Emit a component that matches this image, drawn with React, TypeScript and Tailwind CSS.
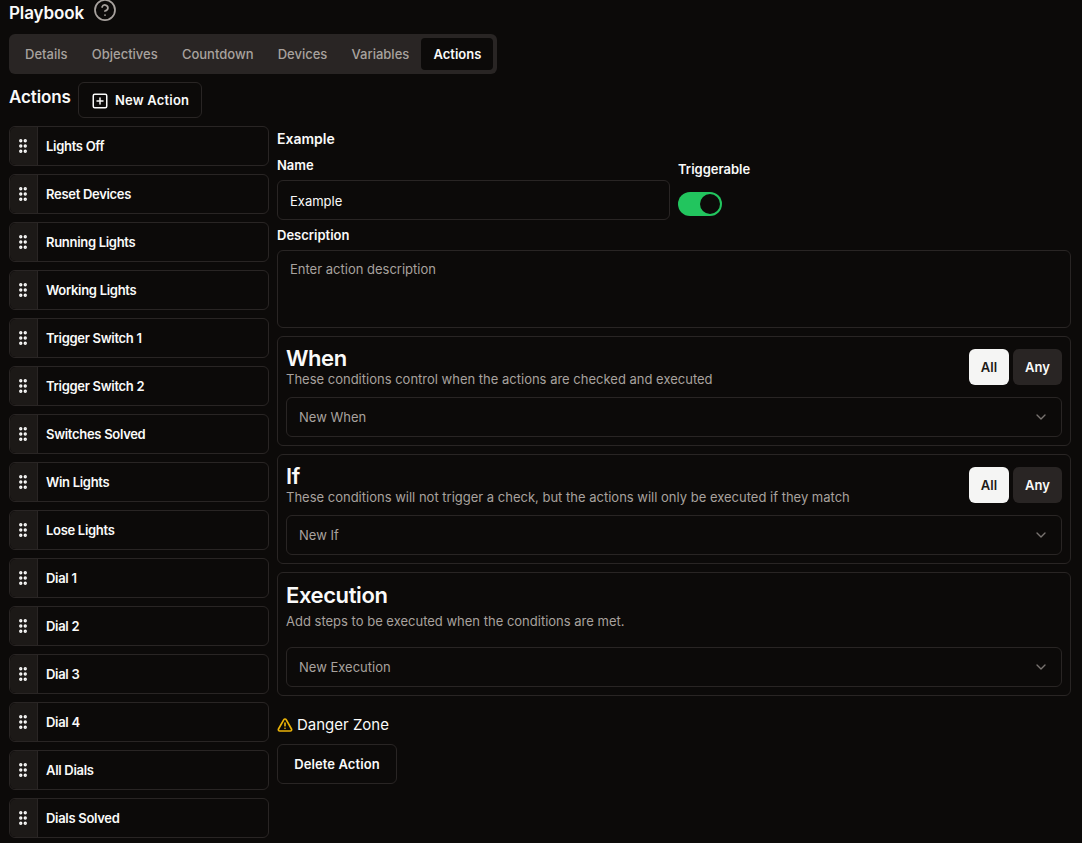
import { ChevronDown, CircleHelp, GripVertical, SquarePlus, TriangleAlert } from "lucide-react"

const tabs = ["Details", "Objectives", "Countdown", "Devices", "Variables", "Actions"]
const actions = [
  "Lights Off",
  "Reset Devices",
  "Running Lights",
  "Working Lights",
  "Trigger Switch 1",
  "Trigger Switch 2",
  "Switches Solved",
  "Win Lights",
  "Lose Lights",
  "Dial 1",
  "Dial 2",
  "Dial 3",
  "Dial 4",
  "All Dials",
  "Dials Solved",
]

function Select({ label }: { label: string }) {
  return (
    <div className="flex h-10 items-center justify-between rounded-md border border-[#292524] px-3 text-[13px] text-[#a8a29e]">
      <span className="pt-px">{label}</span>
      <ChevronDown className="h-4 w-4 opacity-70" />
    </div>
  )
}

function Toggle() {
  return (
    <div className="flex gap-1">
      <button className="h-9 w-10 rounded-md bg-[#f5f5f4] pt-px text-[13px] font-semibold text-[#1c1917]">All</button>
      <button className="h-9 w-[49px] rounded-md bg-[#292524] pt-px text-[13px] font-semibold text-[#fafaf9]">Any</button>
    </div>
  )
}

function Condition({ title, text, select }: { title: string; text: string; select: string }) {
  return (
    <section className="flex h-[110px] flex-col rounded-md border border-[#292524] px-2 pt-2">
      <div className="flex h-[52px] items-start justify-between">
        <div>
          <h2 className="text-[22px] leading-[26px] font-semibold tracking-[-0.4px]">{title}</h2>
          <p className="text-[13px] leading-[16px] text-[#a8a29e]">{text}</p>
        </div>
        <div className="pt-1">
          <Toggle />
        </div>
      </div>
      <Select label={select} />
    </section>
  )
}

export default function App() {
  return (
    <div className="h-[843px] overflow-hidden bg-[#0c0a09] pl-[9px] pr-[11px] font-['Inter',sans-serif] text-[#fafaf9]">
      <div className="flex h-[34px] items-start gap-[9px]">
        <h1 className="text-[17px] leading-[27px] font-semibold tracking-[-0.1px]">Playbook</h1>
        <CircleHelp className="-mt-0.5 h-6 w-6 text-[#a8a29e]" strokeWidth={1.75} />
      </div>
      <div className="inline-flex h-10 items-center rounded-md bg-[#292524] p-1 text-[13px] font-medium text-[#a8a29e]">
        {tabs.map((tab) => (
          <div
            key={tab}
            className={
              tab === "Actions"
                ? "rounded-sm bg-[#0c0a09] px-[12.1px] py-1.5 leading-5 font-semibold text-[#fafaf9]"
                : "rounded-sm px-[12.1px] py-1.5 leading-5"
            }
          >
            {tab}
          </div>
        ))}
      </div>
      <div className="mt-2 flex h-9 items-center gap-2">
        <h2 className="-mt-1 w-[61px] shrink-0 whitespace-nowrap text-[17px] font-semibold tracking-[-0.1px]">Actions</h2>
        <button className="flex h-9 items-center gap-[6px] rounded-md border border-[#292524] px-3 pt-px text-[13px] font-semibold tracking-[0.2px]">
          <SquarePlus className="h-[18px] w-[18px]" />
          New Action
        </button>
      </div>
      <div className="mt-2 flex gap-2">
        <ul className="flex w-[260px] flex-col gap-2">
          {actions.map((action) => (
            <li key={action} className="flex h-10 rounded-md border border-[#292524]">
              <div className="flex w-7 items-center justify-center rounded-l-md border-r border-[#292524] bg-[#1c1917] pr-px">
                <GripVertical className="h-[18px] w-[18px]" strokeWidth={2.5} />
              </div>
              <div className="flex items-center pt-0.5 pl-2 text-[13px] font-semibold tracking-[-0.3px]">{action}</div>
            </li>
          ))}
        </ul>
        <div className="flex min-w-0 flex-1 flex-col">
          <h3 className="h-5 text-sm leading-[26px] font-semibold">Example</h3>
          <div className="mt-[10px] flex gap-2">
            <div className="w-[393px]">
              <label className="block h-[24px] text-[13px] leading-[18px] font-semibold">Name</label>
              <div className="flex h-10 items-center rounded-md border border-[#292524] px-3 pt-[3px] text-[13px]">Example</div>
            </div>
            <div>
              <label className="block h-[24px] text-[13px] leading-[26px] font-semibold">Triggerable</label>
              <div className="mt-3 flex h-6 w-11 items-center justify-end rounded-full bg-[#22c55e] px-0.5">
                <div className="h-5 w-5 rounded-full bg-[#0c0a09]" />
              </div>
            </div>
          </div>
          <label className="mt-[5px] block h-[25px] text-[13px] leading-[20px] font-semibold">Description</label>
          <div className="h-[78px] rounded-md border border-[#292524] px-3 py-2 text-[13px] leading-5 text-[#a8a29e]">
            Enter action description
          </div>
          <div className="mt-2 flex flex-col gap-2">
            <Condition
              title="When"
              text="These conditions control when the actions are checked and executed"
              select="New When"
            />
            <Condition
              title="If"
              text="These conditions will not trigger a check, but the actions will only be executed if they match"
              select="New If"
            />
            <section className="flex h-[124px] flex-col rounded-md border border-[#292524] px-2 pt-2">
              <h2 className="text-[22px] leading-[28px] font-semibold tracking-[-0.4px]">Execution</h2>
              <p className="mt-[2px] h-[36px] text-[13px] leading-[20px] text-[#a8a29e]">
                Add steps to be executed when the conditions are met.
              </p>
              <Select label="New Execution" />
            </section>
          </div>
          <div className="mt-[18px] flex h-[22px] items-center gap-1 text-[15px]">
            <TriangleAlert className="h-4 w-4 text-[#eab308]" strokeWidth={2.5} />
            Danger Zone
          </div>
          <button className="mt-2 h-10 w-[120px] rounded-md border border-[#292524] pt-0.5 text-[13px] font-semibold tracking-[0.1px]">
            Delete Action
          </button>
        </div>
      </div>
    </div>
  )
}
